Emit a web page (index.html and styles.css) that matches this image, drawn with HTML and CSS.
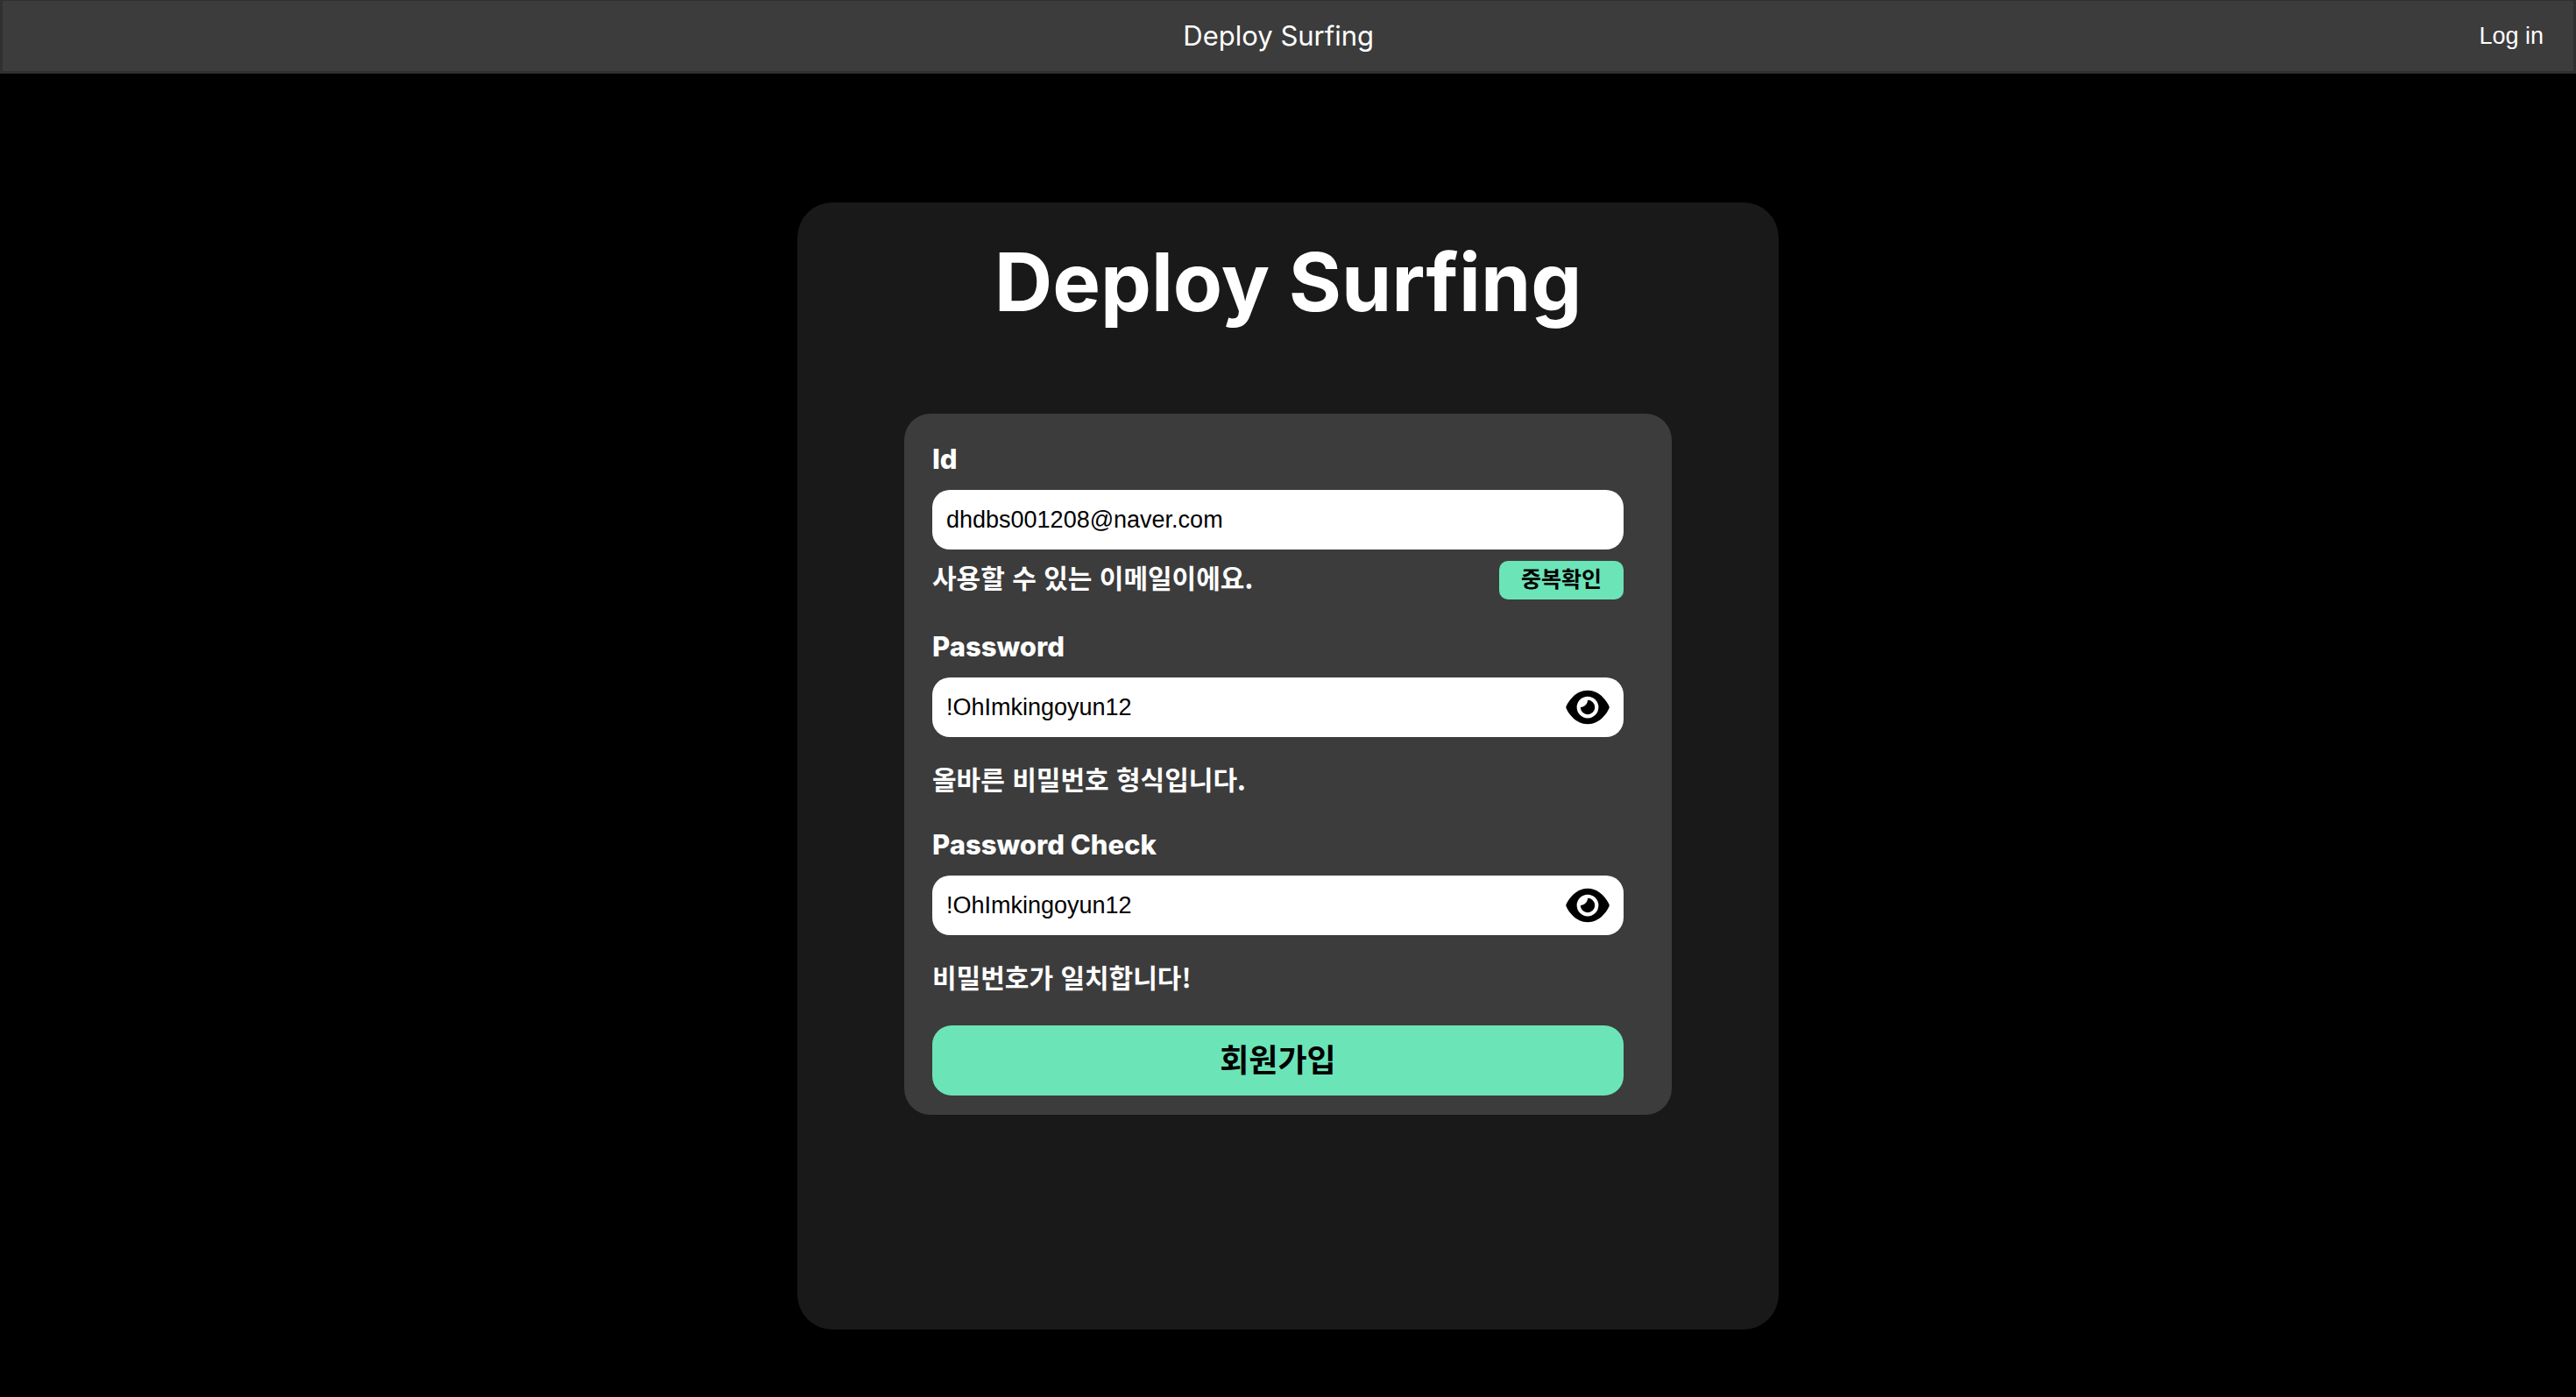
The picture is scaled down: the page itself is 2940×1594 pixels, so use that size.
FILE: index.html
```html
<!DOCTYPE html>
<html lang="ko">
<head>
<meta charset="utf-8">
<meta name="viewport" content="width=device-width, initial-scale=1">
<title>Deploy Surfing</title>
<link rel="stylesheet" href="styles.css">
</head>
<body>
<svg class="sprite" aria-hidden="true">
  <symbol id="eye" viewBox="0 0 576 512">
    <path d="M288 32c-80.8 0-145.5 36.8-192.6 80.6C48.6 156 17.3 208 2.5 243.7c-3.3 7.9-3.3 16.7 0 24.6C17.3 304 48.6 356 95.4 399.4C142.5 443.2 207.2 480 288 480s145.5-36.8 192.6-80.6c46.8-43.5 78.1-95.4 93-131.1c3.3-7.9 3.3-16.7 0-24.6c-14.9-35.7-46.2-87.7-93-131.1C433.5 68.8 368.8 32 288 32zM144 256a144 144 0 1 1 288 0 144 144 0 1 1 -288 0zm144-96c0 53-43 96-96 96a96 96 0 1 0 96-96z"/>
  </symbol>
</svg>
<header class="topbar">
  <a class="brand" href="#">Deploy Surfing</a>
  <button class="login" type="button">Log in</button>
</header>
<main class="page">
  <section class="card">
    <h1 class="title">Deploy Surfing</h1>
    <form class="panel">
      <div class="field">
        <label class="label" for="id">Id</label>
        <input class="input" id="id" type="text" value="dhdbs001208@naver.com">
        <div class="status">
          <p class="message">사용할 수 있는 이메일이에요.</p>
          <button class="check" type="button">중복확인</button>
        </div>
      </div>
      <div class="field">
        <label class="label" for="password">Password</label>
        <div class="secret">
          <input class="input" id="password" type="text" value="!OhImkingoyun12">
          <button class="toggle" type="button" aria-label="Show password"><svg class="eye"><use href="#eye"/></svg></button>
        </div>
        <p class="message message-spaced">올바른 비밀번호 형식입니다.</p>
      </div>
      <div class="field">
        <label class="label" for="password-check">Password Check</label>
        <div class="secret">
          <input class="input" id="password-check" type="text" value="!OhImkingoyun12">
          <button class="toggle" type="button" aria-label="Show password check"><svg class="eye"><use href="#eye"/></svg></button>
        </div>
        <p class="message message-spaced">비밀번호가 일치합니다!</p>
      </div>
      <button class="submit" type="submit">회원가입</button>
    </form>
  </section>
</main>
</body>
</html>
```

FILE: styles.css
```css
* {
  box-sizing: border-box;
}

body {
  margin: 0;
  min-height: 100vh;
  background: #000;
  color: #fff;
  font-family: Inter, "Noto Sans CJK KR", sans-serif;
}

button {
  border: 0;
  padding: 0;
  cursor: pointer;
}

.sprite {
  display: none;
}

.topbar {
  display: grid;
  grid-template-columns: 1fr auto;
  align-items: center;
  height: 84px;
  padding-right: 34px;
  border: 3px solid #303030;
  border-top-width: 1px;
  background: #3c3c3c;
}

.brand {
  justify-self: center;
  padding-left: 86px;
  color: #fff;
  font-size: 31px;
  line-height: 40px;
  text-decoration: none;
}

.login {
  background: none;
  color: #fff;
  font: 27px/40px "Liberation Sans", Arial, sans-serif;
}

.page {
  display: flex;
  justify-content: center;
  padding: 147px 24px 77px;
}

.card {
  width: 100%;
  max-width: 1120px;
  padding: 36px 122px 245px;
  border-radius: 40px;
  background: #191919;
}

.title {
  margin: 0 0 95px;
  font-size: 92px;
  font-weight: 700;
  line-height: 110px;
  text-align: center;
}

.panel {
  display: flex;
  flex-direction: column;
  gap: 32px;
  padding: 32px 55px 22px 32px;
  border-radius: 30px;
  background: #3c3c3c;
}

.field {
  display: flex;
  flex-direction: column;
}

.label {
  margin-bottom: 16px;
  font-size: 31px;
  font-weight: 800;
  line-height: 39px;
}

.input {
  width: 100%;
  height: 68px;
  padding: 0 16px;
  border: 0;
  border-radius: 20px;
  background: #fff;
  color: #000;
  font: 27px "Liberation Sans", Arial, sans-serif;
}

.status {
  display: flex;
  justify-content: space-between;
  align-items: flex-start;
  min-height: 46px;
  margin-top: 13px;
}

.message {
  margin: 0;
  font-family: "Noto Sans CJK KR", sans-serif;
  font-size: 30px;
  font-weight: 700;
  line-height: 36px;
}

.message-spaced {
  margin: 29px 0 6px;
}

.check {
  width: 142px;
  height: 44px;
  padding-bottom: 6px;
  border-radius: 10px;
  background: #6be4b8;
  color: #000;
  font: 700 25px/36px "Noto Sans CJK KR", sans-serif;
}

.secret {
  position: relative;
}

.toggle {
  position: absolute;
  top: 12px;
  right: 16px;
  display: flex;
  background: none;
}

.eye {
  width: 50px;
  height: 44px;
}

.submit {
  height: 80px;
  padding-bottom: 6px;
  border-radius: 22px;
  background: #6be4b8;
  color: #000;
  font: 700 36px/48px "Noto Sans CJK KR", sans-serif;
}
```
